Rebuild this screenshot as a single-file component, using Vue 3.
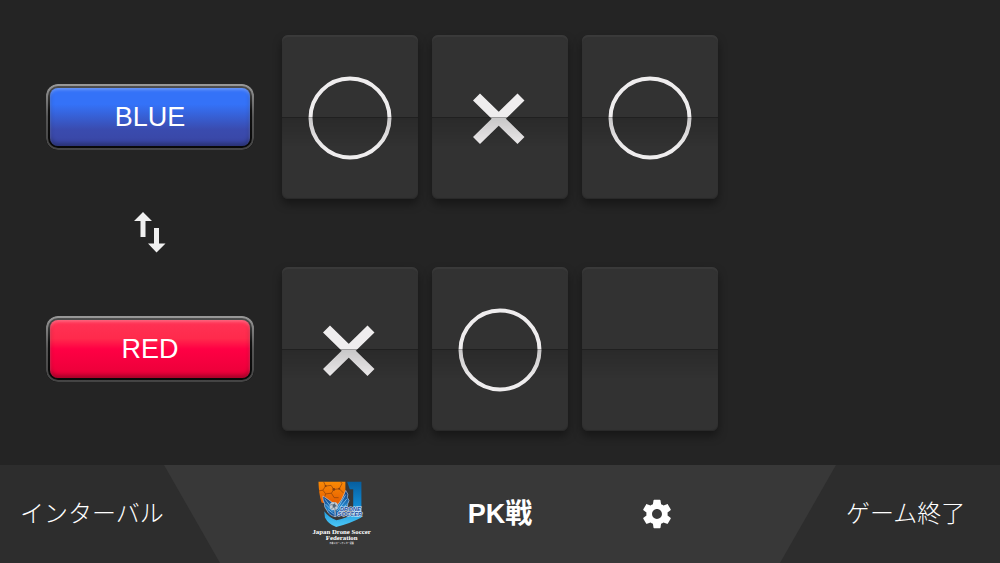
<template>
    <div class="page">
        <main class="board">
            <button class="team team-blue" type="button">BLUE</button>
            <div class="cards">
                <button v-for="(mark, i) in blue" :key="i" class="card" type="button" :aria-label="'BLUE ' + (i + 1)">
                    <svg class="mark" viewBox="0 0 136 164" aria-hidden="true">
                        <circle v-if="mark === 'o'" cx="68" cy="83" r="39.5" />
                        <path v-if="mark === 'x'" d="M44.500 62 L89 105.500 M89 62 L44.500 105.500" />
                    </svg>
                </button>
            </div>

            <button class="swap" type="button" aria-label="swap" @click="swap">
                <svg width="32" height="42" viewBox="0 0 32 42" aria-hidden="true">
                    <path d="M9 0 L18 9 H11.500 V25 H6.500 V9 H0 Z M20 16 H25 V31.500 H31.500 L22.500 40.500 L14 31.500 H20 Z" />
                </svg>
            </button>

            <button class="team team-red" type="button">RED</button>
            <div class="cards">
                <button v-for="(mark, i) in red" :key="i" class="card" type="button" :aria-label="'RED ' + (i + 1)">
                    <svg class="mark" viewBox="0 0 136 164" aria-hidden="true">
                        <circle v-if="mark === 'o'" cx="68" cy="83" r="39.5" />
                        <path v-if="mark === 'x'" d="M44.500 62 L89 105.500 M89 62 L44.500 105.500" />
                    </svg>
                </button>
            </div>
        </main>

        <footer class="footer">
            <button class="footer-button footer-left" type="button">インターバル</button>
            <div class="footer-center">
                <svg class="logo" viewBox="0 0 270 240" role="img" aria-label="Japan Drone Soccer Federation">
                    <defs>
                        <linearGradient id="orange" x1="0" y1="0" x2="0" y2="1">
                            <stop offset="0" stop-color="#f98a05" />
                            <stop offset="1" stop-color="#e65b00" />
                        </linearGradient>
                        <linearGradient id="shield" x1="0" y1="0" x2="0" y2="1">
                            <stop offset="0" stop-color="#075e9e" />
                            <stop offset="0.5" stop-color="#1188d0" />
                            <stop offset="1" stop-color="#4cc8f8" />
                        </linearGradient>
                        <linearGradient id="wing" x1="0" y1="0" x2="0" y2="1">
                            <stop offset="0" stop-color="#0c2f70" />
                            <stop offset="0.6" stop-color="#2387cf" />
                            <stop offset="1" stop-color="#0b3c85" />
                        </linearGradient>
                    </defs>
                    <path d="M63 25 H142 V66 L124 92 H92 L72 86 Q64 60 63 25 Z" fill="url(#orange)" />
                    <path d="M78 25 L84 38 L76 50 L84 61 L101 59 L108 48 L100 36 L84 38 M108 48 L124 46 L132 31 L128 25 M124 46 L136 58 M101 59 L109 72 L122 72 M76 50 L65 52 M84 61 L79 76" fill="none" stroke="#873f0d" stroke-width="2" />
                    <circle cx="84" cy="38" r="3" fill="#873f0d" />
                    <circle cx="108" cy="48" r="4" fill="#873f0d" />
                    <circle cx="124" cy="46" r="3" fill="#873f0d" />
                    <path d="M147 25 H189 V130 Q160 146 115 158 Q92 150 82 130 L80 112 Q94 131 116 138 Q146 131 165 119 V47 H155 Z" fill="url(#shield)" />
                    <path d="M76 67 Q94 78 108 90 L112 128 Q94 124 88 110 Q78 98 81 90 Q75 80 76 67 Z" fill="url(#wing)" stroke="#dceeff" stroke-width="1.500" />
                    <path d="M143 51 Q153 62 148 72 Q157 80 149 90 Q150 104 134 112 Q126 124 112 128 L115 99 Q134 78 143 51 Z" fill="url(#wing)" stroke="#dceeff" stroke-width="1.500" />
                    <path d="M81 75 L103 103 M84 91 L106 113 M91 107 L109 121 M143 63 L118 105 M146 76 L118 111 M145 92 L117 119" fill="none" stroke="#9fd4f5" stroke-width="2" />
                    <circle cx="108" cy="97" r="12" fill="#c4ccd5" />
                    <path d="M104 92 L111 90 L115 96 L111 102 L105 101 Z" fill="#536678" />
                    <path d="M97 94 L104 92 M111 90 L109 86 M115 96 L119 98 M111 102 L112 108 M105 101 L101 106" fill="none" stroke="#536678" stroke-width="2" />
                    <g class="logo-word">
                        <text x="126" y="112">DRONE</text>
                        <text x="119" y="125">SOCCER</text>
                    </g>
                    <g class="logo-name">
                        <text x="131" y="178">Japan Drone Soccer</text>
                        <text x="131" y="195">Federation</text>
                    </g>
                    <text class="logo-caption" x="131" y="209">日本ドローンサッカー連盟</text>
                </svg>
                <h1 class="title">PK戦</h1>
                <button class="settings" type="button" aria-label="settings">
                    <svg width="34" height="34" viewBox="0 0 24 24" aria-hidden="true">
                        <path d="M19.430 12.980c.04-.32.07-.64.07-.98s-.03-.66-.07-.98l2.110-1.650c.19-.15.24-.42.12-.64l-2-3.460c-.12-.22-.39-.3-.61-.22l-2.490 1c-.52-.4-1.080-.73-1.690-.98l-.38-2.650C14.460 2.180 14.250 2 14 2h-4c-.25 0-.46.18-.49.42l-.38 2.650c-.61.25-1.170.59-1.690.98l-2.490-1c-.23-.09-.49 0-.61.22l-2 3.460c-.13.22-.07.49.12.64l2.110 1.650c-.04.32-.07.65-.07.98s.03.66.07.98l-2.110 1.650c-.19.15-.24.42-.12.64l2 3.460c.12.22.39.3.61.22l2.490-1c.52.4 1.080.73 1.690.98l.38 2.650c.03.24.24.42.49.42h4c.25 0 .46-.18.49-.42l.38-2.650c.61-.25 1.170-.59 1.690-.98l2.490 1c.23.09.49 0 .61-.22l2-3.460c.12-.22.07-.49-.12-.64l-2.110-1.650zM12 15.500c-1.930 0-3.500-1.570-3.500-3.500s1.570-3.500 3.500-3.500 3.500 1.570 3.500 3.500-1.570 3.500-3.500 3.500z" />
                    </svg>
                </button>
            </div>
            <button class="footer-button footer-right" type="button">ゲーム終了</button>
        </footer>
    </div>
</template>

<script setup>
    import { ref } from 'vue'

    const blue = ref(['o', 'x', 'o'])
    const red = ref(['x', 'o', ''])

    function swap() {
        const marks = blue.value
        blue.value = red.value
        red.value = marks
    }
</script>

<style>
    body {
        margin: 0;
        background: #242424;
    }
</style>

<style scoped>
    .page {
        display: flex;
        flex-direction: column;
        min-height: 100vh;
        background: #242424;
        color: #fff;
        font-family: "Liberation Sans", "Noto Sans CJK JP", sans-serif;
    }

    button {
        padding: 0;
        border: none;
        background: none;
        color: inherit;
        font-family: inherit;
        cursor: pointer;
    }

    svg {
        display: block;
    }

    .board {
        flex: 1;
        box-sizing: border-box;
        display: grid;
        grid-template-columns: minmax(0, 208fr) minmax(0, 436fr) minmax(0, 254fr);
        grid-template-rows: minmax(164px, 1fr) 68px minmax(164px, 1fr);
        column-gap: 28px;
        align-items: center;
        padding: 35px 0 34px 46px;
    }

    .team {
        position: relative;
        grid-column: 1;
        height: 66px;
        border: 4px solid transparent;
        border-radius: 12px;
        font-size: 27px;
        line-height: 32px;
        box-shadow: inset 0 2px 3px rgba(255, 255, 255, 0.25), inset 0 -3px 4px rgba(0, 0, 0, 0.3);
    }

    .team-blue {
        background:
            linear-gradient(#3472f8 0%, #3472f8 28%, #3a4bae 72%, #3a46a4 100%) padding-box,
            linear-gradient(#555, #111 40%, #080808) border-box;
    }

    .team-red {
        background:
            linear-gradient(#ff3355 0%, #ff2a4c 32%, #ff0044 50%, #e80038 100%) padding-box,
            linear-gradient(#555, #111 40%, #080808) border-box;
    }

    /* thin metal rim around the bezel */
    .team::before {
        content: "";
        position: absolute;
        inset: -4px;
        padding: 2px;
        border-radius: 12px;
        background: linear-gradient(#999, #555 50%, #444);
        mask: linear-gradient(#000 0 0) content-box exclude, linear-gradient(#000 0 0);
    }

    .cards {
        grid-column: 2;
        align-self: stretch;
        display: grid;
        grid-template-columns: repeat(3, minmax(0, 1fr));
        gap: 14px;
    }

    .card {
        position: relative;
        overflow: hidden;
        border-radius: 6px;
        background: #323232;
        box-shadow: 0 5px 10px rgba(0, 0, 0, 0.4), inset 0 2px 1px #3a3a3a, inset 0 -1px 1px #292929;
    }

    /* lower flap of the card, in the shade of the upper one */
    .card::after {
        content: "";
        position: absolute;
        inset: 50% 0 0;
        border-top: 1px solid rgba(0, 0, 0, 0.35);
        background: linear-gradient(rgba(0, 0, 0, 0.16), transparent 30px);
    }

    .mark {
        width: 100%;
        height: 100%;
        fill: none;
        stroke: #efedee;
    }

    .mark circle {
        stroke-width: 4;
    }

    .mark path {
        stroke-width: 10;
    }

    .swap {
        grid-column: 1;
        justify-self: center;
        fill: #f0f0f0;
    }

    .footer {
        display: grid;
        grid-template-columns: 164px minmax(0, 1fr) 164px;
        min-height: 98px;
        background: #2d2d2d;
    }

    .footer-button {
        font-size: 24px;
        line-height: 32px;
        font-weight: 300;
        white-space: nowrap;
        text-align: left;
    }

    .footer-left {
        padding-left: 20px;
    }

    .footer-right {
        padding-left: 10px;
    }

    .footer-center {
        display: grid;
        grid-template-columns: repeat(3, 157px);
        justify-content: center;
        justify-items: center;
        align-items: center;
        background: #383838;
        clip-path: polygon(0 0, 100% 0, calc(100% - 56px) 100%, 56px 100%);
    }

    .logo {
        width: 92px;
        height: 82px;
    }

    .logo text {
        text-anchor: middle;
    }

    .logo-word {
        font-size: 17px;
        font-weight: bold;
        font-style: italic;
        fill: #12479c;
        stroke: #e4f0fa;
        stroke-width: 3px;
        paint-order: stroke;
    }

    .logo .logo-word text {
        text-anchor: start;
    }

    .logo-name {
        font-family: "Liberation Serif", serif;
        font-size: 20px;
        font-weight: bold;
        fill: #fff;
    }

    .logo-caption {
        font-size: 6px;
        font-weight: bold;
        fill: #ddd;
    }

    .title {
        margin: 0;
        font-size: 27px;
        line-height: 32px;
        font-weight: bold;
    }

    .settings {
        fill: #fff;
    }
</style>
